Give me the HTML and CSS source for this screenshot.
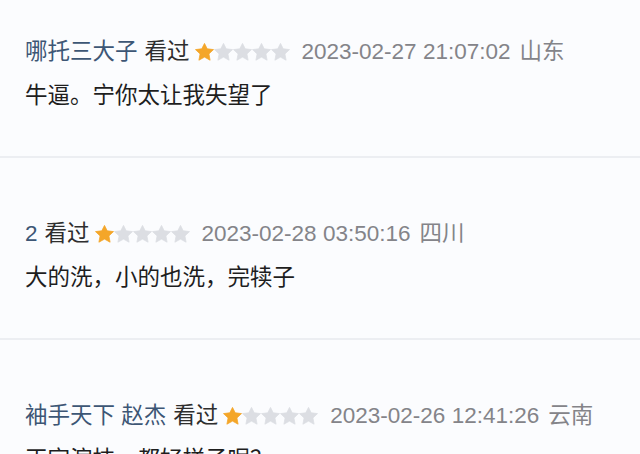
FILE: index.html
```html
<!DOCTYPE html>
<html lang="zh-CN">
<head>
    <meta charset="UTF-8">
    <meta name="viewport" content="width=device-width, initial-scale=1.0">
    <title>短评</title>
    <link rel="stylesheet" href="styles.css">
</head>
<body>
    <svg class="defs" width="0" height="0">
        <defs>
            <polygon id="star" points="9.5,0.4 12.2,5.8 18.5,6.6 13.9,10.9 15.1,17.2 9.5,14.1 3.9,17.2 5.1,10.9 0.5,6.6 6.8,5.8"/>
        </defs>
    </svg>

    <div class="comments">
        <div class="comment">
            <div class="comment-info">
                <span class="user">哪托三大子</span>
                <span class="status">看过</span>
                <svg class="stars" width="95" height="18" viewBox="0 0 95 18">
                    <use href="#star" class="on"/>
                    <use href="#star" x="19"/>
                    <use href="#star" x="38"/>
                    <use href="#star" x="57"/>
                    <use href="#star" x="76"/>
                </svg>
                <span class="time">2023-02-27 21:07:02</span>
                <span class="location">山东</span>
            </div>
            <p class="comment-text">牛逼。宁你太让我失望了</p>
        </div>

        <div class="comment">
            <div class="comment-info">
                <span class="user">2</span>
                <span class="status">看过</span>
                <svg class="stars" width="95" height="18" viewBox="0 0 95 18">
                    <use href="#star" class="on"/>
                    <use href="#star" x="19"/>
                    <use href="#star" x="38"/>
                    <use href="#star" x="57"/>
                    <use href="#star" x="76"/>
                </svg>
                <span class="time">2023-02-28 03:50:16</span>
                <span class="location">四川</span>
            </div>
            <p class="comment-text">大的洗，小的也洗，完犊子</p>
        </div>

        <div class="comment">
            <div class="comment-info">
                <span class="user">袖手天下 赵杰</span>
                <span class="status">看过</span>
                <svg class="stars" width="95" height="18" viewBox="0 0 95 18">
                    <use href="#star" class="on"/>
                    <use href="#star" x="19"/>
                    <use href="#star" x="38"/>
                    <use href="#star" x="57"/>
                    <use href="#star" x="76"/>
                </svg>
                <span class="time">2023-02-26 12:41:26</span>
                <span class="location">云南</span>
            </div>
            <p class="comment-text">正宗演技，都好样子呢？</p>
        </div>
    </div>
</body>
</html>
```

FILE: styles.css
```css
body {
    margin: 0;
    background: #fbfcfe;
    font-family: "Liberation Sans", "Noto Sans CJK SC", sans-serif;
    font-size: 22.5px;
    overflow: hidden;
}
.defs {
    position: absolute;
}
.comments {
    padding-top: 36px;
}
.comment {
    padding: 0 0 44px 25px;
    margin-bottom: 60px;
    border-bottom: 2px solid #eceef2;
}
.comment-info {
    display: flex;
    align-items: center;
    height: 32px;
    line-height: 32px;
    white-space: nowrap;
}
.user {
    color: #3d5675;
}
.status {
    color: #2e2e2e;
    margin-left: 7px;
}
.stars {
    margin-left: 5px;
    fill: #dcdee3;
    stroke: #dcdee3;
    stroke-width: 0.8;
    stroke-linejoin: round;
}
.stars .on {
    fill: #f4a629;
    stroke: #f4a629;
}
.time {
    color: #848489;
    margin-left: 12px;
}
.location {
    color: #848489;
    margin-left: 9px;
}
.comment-text {
    margin: 12px 0 0;
    line-height: 32px;
    color: #1e1e1e;
}
```
